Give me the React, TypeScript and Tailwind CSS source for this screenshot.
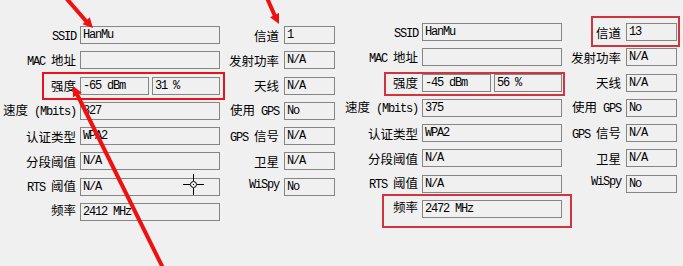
import React from 'react';

type Row = { label: string; values: string[]; lift?: boolean };

const CJK = /([\u4e00-\u9fff]+)/;

// mixed label: CJK runs a bit larger than the ascii ones, like the dialog font
const Label: React.FC<{ text: string; lift?: boolean }> = ({ text, lift }) => {
    const parts = text.split(CJK).filter(Boolean);
    return (
        <div className={`flex items-center justify-end h-[18px] whitespace-pre text-black ${lift ? '-translate-y-[3px]' : ''}`}>
            <span className="leading-[18px]">
                {parts.map((p, i) =>
                    CJK.test(p) ? (
                        <span key={i} className="font-['Noto_Sans_CJK_SC',sans-serif] text-[12.5px]">{p}</span>
                    ) : (
                        <span key={i} className="font-['Liberation_Mono',monospace] text-[12px] tracking-[-1.2px]">{p}</span>
                    )
                )}
            </span>
        </div>
    );
};

const Box: React.FC<{ value: string; className?: string }> = ({ value, className }) => (
    <div className={`h-[18px] border border-[#858585] bg-[#f0f0f0] pl-[2px] flex items-center font-['Liberation_Mono',monospace] text-[12px] tracking-[-1.2px] text-black whitespace-pre overflow-hidden ${className ?? ''}`}>
        {value}
    </div>
);

const Panel: React.FC<{ left: Row[]; mid: Row[]; top: string }> = ({ left, mid, top }) => (
    <div className={`w-[342px] shrink-0 ${top}`}>
        <div className="grid grid-cols-[80px_140px_64px_51px] gap-y-[7.3px]">
            {left.map((row, i) => (
                <React.Fragment key={i}>
                    <div className="pr-[4px]" style={{ gridRow: i + 1, gridColumn: 1 }}>
                        <Label text={row.label} lift={row.lift} />
                    </div>
                    <div style={{ gridRow: i + 1, gridColumn: 2 }}>
                        {row.values.length === 2 ? (
                            <div className="flex gap-[3px]">
                                <Box value={row.values[0]} className="w-[69px]" />
                                <Box value={row.values[1]} className="w-[68px]" />
                            </div>
                        ) : (
                            <Box value={row.values[0]} />
                        )}
                    </div>
                </React.Fragment>
            ))}
            {mid.map((row, i) => (
                <React.Fragment key={'m' + i}>
                    <div className="pr-[5px]" style={{ gridRow: i + 1, gridColumn: 3 }}>
                        <Label text={row.label} lift={row.lift} />
                    </div>
                    <div style={{ gridRow: i + 1, gridColumn: 4 }}>
                        <Box value={row.values[0]} />
                    </div>
                </React.Fragment>
            ))}
        </div>
    </div>
);

const leftRows = (dbm: string, pct: string, speed: string, freq: string): Row[] => [
    { label: 'SSID', values: ['HanMu'] },
    { label: 'MAC 地址', values: [''] },
    { label: '强度', values: [dbm, pct] },
    { label: '速度 (Mbits)', values: [speed] },
    { label: '认证类型', values: ['WPA2'] },
    { label: '分段阈值', values: ['N/A'] },
    { label: 'RTS 阈值', values: ['N/A'] },
    { label: '频率', values: [freq], lift: true },
];

const midRows = (channel: string): Row[] => [
    { label: '信道', values: [channel] },
    { label: '发射功率', values: ['N/A'] },
    { label: '天线', values: ['N/A'] },
    { label: '使用 GPS', values: ['No'] },
    { label: 'GPS 信号', values: ['N/A'] },
    { label: '卫星', values: ['N/A'] },
    { label: 'WiSpy', values: ['No'], lift: true },
];

export default function App() {
    return (
        <div className="relative w-[683px] h-[266px] bg-[#f0f0f0] overflow-hidden">
            <div className="flex">
                <Panel left={leftRows('-65 dBm', '31 %', '327', '2412 MHz')} mid={midRows('1')} top="pt-[26px]" />
                <Panel left={leftRows('-45 dBm', '56 %', '375', '2472 MHz')} mid={midRows('13')} top="pt-[23px]" />
            </div>

            {/* annotation boxes */}
            <div className="absolute left-[42px] top-[72px] w-[183px] h-[28px] border-2 border-[#e8141c]" />
            <div className="absolute left-[384px] top-[72px] w-[181px] h-[24px] border-2 border-[#d0343f]" />
            <div className="absolute left-[382px] top-[194px] w-[190px] h-[34px] border-2 border-[#d0343f]" />
            <div className="absolute left-[591px] top-[16px] w-[89px] h-[31px] border-2 border-[#d0343f]" />

            {/* crosshair cursor */}
            <svg className="absolute left-0 top-0" width="683" height="266" viewBox="0 0 683 266">
                <g stroke="#000" strokeWidth="1" fill="none">
                    <line x1="183" y1="184.5" x2="190" y2="184.5" />
                    <line x1="197" y1="184.5" x2="204" y2="184.5" />
                    <line x1="193.5" y1="174" x2="193.5" y2="181" />
                    <line x1="193.5" y1="188" x2="193.5" y2="195" />
                    <circle cx="193.5" cy="184.5" r="3" />
                </g>
                <rect x="193" y="184" width="1" height="1" fill="#000" />

                {/* red arrows */}
                <g stroke="#f01010" strokeWidth="4" strokeLinecap="round">
                    <line x1="66" y1="-2" x2="86" y2="21" />
                    <line x1="267" y1="-2" x2="274.5" y2="15" />
                    <line x1="163" y1="268" x2="77.4" y2="95" />
                </g>
                <g fill="#f01010">
                    <polygon points="93,28 82.5,24.3 89.7,17.3" />
                    <polygon points="279,24 270,17.3 279,12.9" />
                    <polygon points="73,86 81.9,92.8 72.9,97.2" />
                </g>
            </svg>
        </div>
    );
}
